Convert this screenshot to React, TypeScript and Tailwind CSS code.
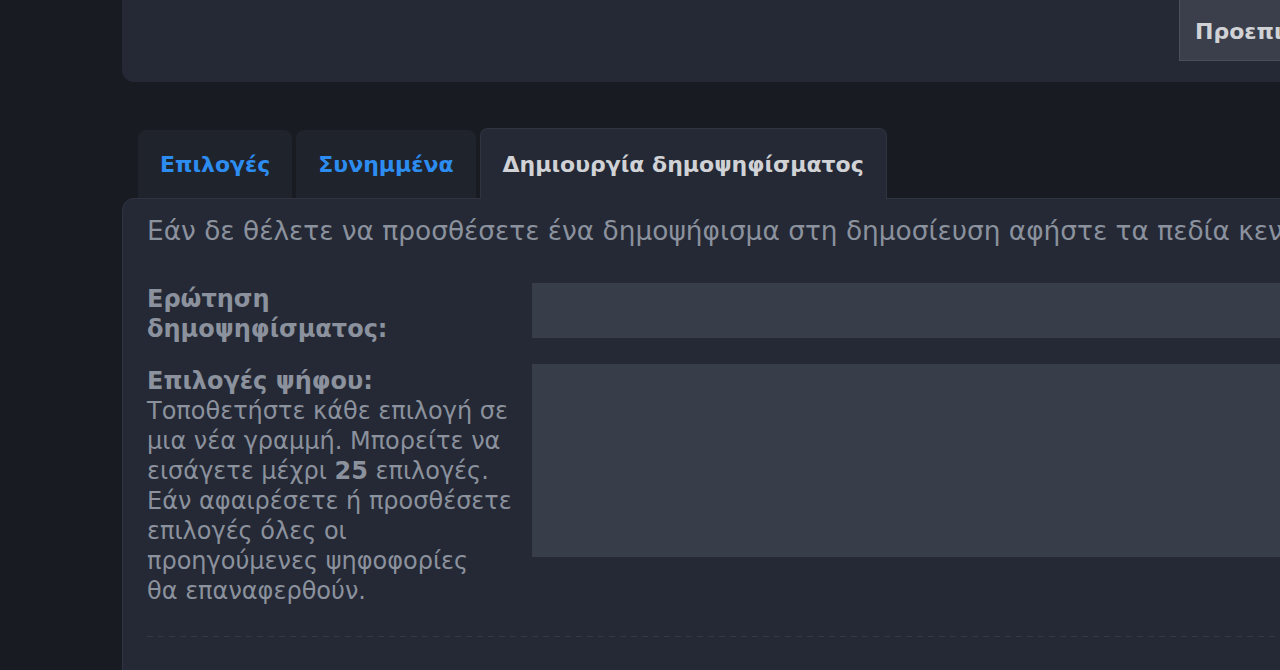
import React from 'react';

const tabs = [
  { id: 'options', label: 'Επιλογές' },
  { id: 'attachments', label: 'Συνημμένα' },
  { id: 'poll', label: 'Δημιουργία δημοψηφίσματος' },
];

export default function App() {
  const active = 'poll';

  return (
    <div
      className="h-[670px] w-[1280px] overflow-hidden bg-[#181b22] text-[#8b919d]"
      style={{ fontFamily: '"DejaVu Sans", Verdana, sans-serif' }}
    >
      <div className="ml-[122px] w-[1400px]">
        {/* Top card with the preview button */}
        <div className="flex h-[82px] items-start rounded-b-xl bg-[#242935] pl-[1057px]">
          <button className="h-[61px] border border-t-0 border-[#4a4f5b] bg-[#3a3f4b] pl-[15px] pr-4 pt-[2px] text-[22px] font-bold text-[#d0d2d6]">
            Προεπισκόπηση
          </button>
        </div>

        {/* Tabs */}
        <div className="mt-[46px] flex items-end gap-[4px] pl-4">
          {tabs.map(tab =>
            tab.id === active ? (
              <div
                key={tab.id}
                className="relative z-10 -mb-px flex h-[71px] items-center rounded-t-lg border border-b-0 border-[#2f3441] bg-[#242935] px-[22px] text-[22px] font-bold text-[#d0d2d6]"
              >
                {tab.label}
              </div>
            ) : (
              <div
                key={tab.id}
                className="flex h-[68px] items-center rounded-t-lg bg-[#1f232c] px-[22px] text-[22px] font-bold text-[#2d8cf0]"
              >
                {tab.label}
              </div>
            )
          )}
        </div>

        {/* Poll panel */}
        <div className="h-[480px] rounded-tl-xl border border-[#2f3441] bg-[#242935] px-6 pt-[14px]">
          <p className="whitespace-nowrap text-[26.4px] leading-[36px]">
            Εάν δε θέλετε να προσθέσετε ένα δημοψήφισμα στη δημοσίευση αφήστε τα πεδία κενά.
          </p>

          <div className="mt-[34px] flex gap-[15px]">
            <label className="w-[370px] pt-[1px] text-[24px] font-bold leading-[30px]">
              Ερώτηση δημοψηφίσματος:
            </label>
            <div className="h-[55px] flex-1 bg-[#383d4a]" />
          </div>

          <div className="mt-[20px] flex gap-[15px]">
            <div className="w-[370px] pt-[2px] text-[24px] leading-[30px]">
              <div className="font-bold">Επιλογές ψήφου:</div>
              <div>
                Τοποθετήστε κάθε επιλογή σε μια νέα γραμμή. Μπορείτε να εισάγετε μέχρι <b>25</b> επιλογές. Εάν αφαιρέσετε ή προσθέσετε επιλογές όλες οι προηγούμενες ψηφοφορίες θα&nbsp;επαναφερθούν.
              </div>
            </div>
            <div className="h-[193px] flex-1 bg-[#383d4a]" />
          </div>

          <div className="mt-[30px] h-px bg-[repeating-linear-gradient(90deg,#333846_0px,#333846_6px,transparent_6px,transparent_11px)]" />
        </div>
      </div>
    </div>
  );
}
